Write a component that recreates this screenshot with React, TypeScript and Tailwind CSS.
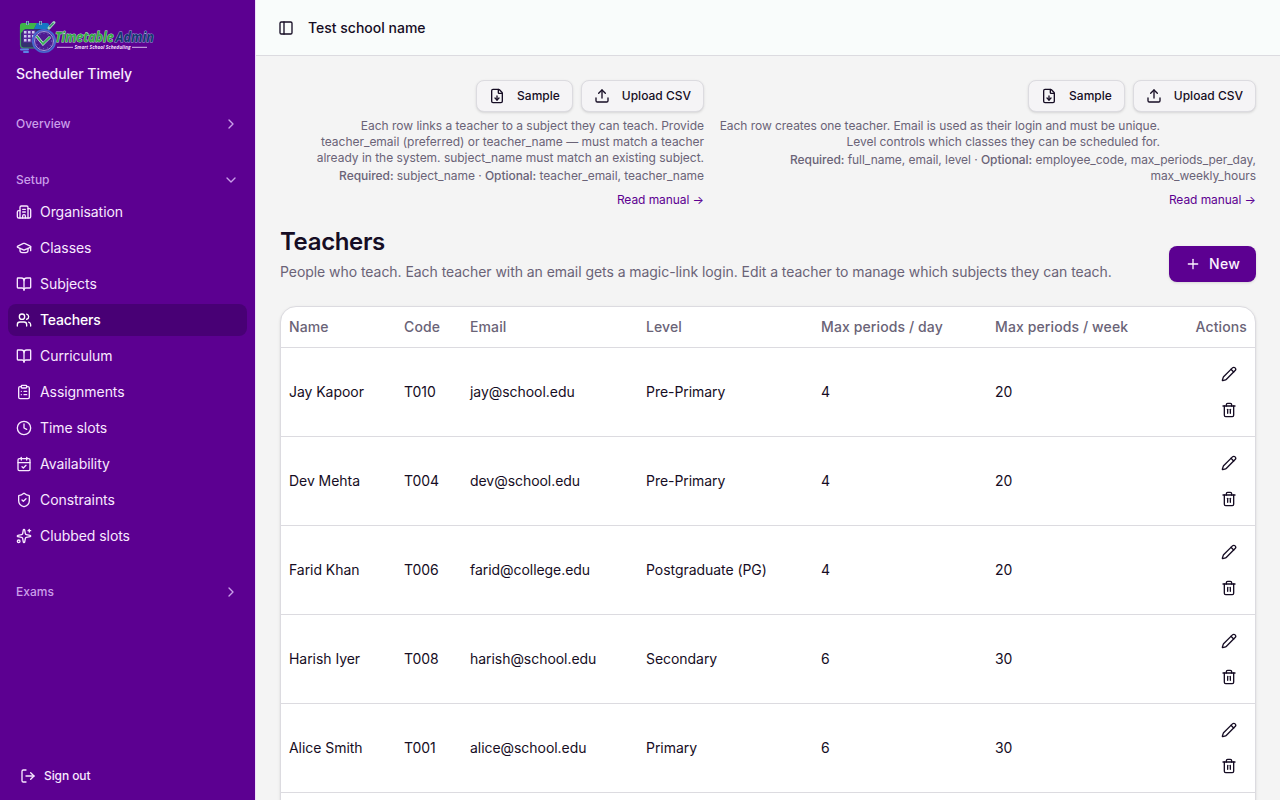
import type { ReactNode } from 'react'
import {
  BookOpen,
  Building2,
  CalendarCheck,
  ChevronDown,
  ChevronRight,
  ClipboardList,
  Clock,
  FileDown,
  GraduationCap,
  LogOut,
  PanelLeft,
  Pencil,
  Plus,
  ShieldCheck,
  Sparkles,
  Trash2,
  Upload,
  Users,
} from 'lucide-react'
import { clsx } from 'clsx'

const setupItems = [
  { label: 'Organisation', icon: Building2 },
  { label: 'Classes', icon: GraduationCap },
  { label: 'Subjects', icon: BookOpen },
  { label: 'Teachers', icon: Users, active: true },
  { label: 'Curriculum', icon: BookOpen },
  { label: 'Assignments', icon: ClipboardList },
  { label: 'Time slots', icon: Clock },
  { label: 'Availability', icon: CalendarCheck },
  { label: 'Constraints', icon: ShieldCheck },
  { label: 'Clubbed slots', icon: Sparkles },
]

const teachers = [
  { name: 'Jay Kapoor', code: 'T010', email: 'jay@school.edu', level: 'Pre-Primary', day: 4, week: 20 },
  { name: 'Dev Mehta', code: 'T004', email: 'dev@school.edu', level: 'Pre-Primary', day: 4, week: 20 },
  { name: 'Farid Khan', code: 'T006', email: 'farid@college.edu', level: 'Postgraduate (PG)', day: 4, week: 20 },
  { name: 'Harish Iyer', code: 'T008', email: 'harish@school.edu', level: 'Secondary', day: 6, week: 30 },
  { name: 'Alice Smith', code: 'T001', email: 'alice@school.edu', level: 'Primary', day: 6, week: 30 },
]

function Logo() {
  return (
    <svg width="140" height="40" viewBox="0 0 140 40" className="block overflow-visible">
      <rect x="4.5" y="8" width="28" height="24" rx="3" fill="#34306f" stroke="#3c9a63" strokeWidth="1.2" />
      <path d="M4 18V9.5q0-2.500 2.500-2.500H21l-3 6H9z" fill="#3fb549" />
      <path d="M18 13l3-6h10q2 0 2 2v4z" fill="#1677c4" />
      <path d="M11.5 5v4M24.5 5v4" stroke="#8fa9cf" strokeWidth="3" />
      <path d="M11.5 5.500v3M24.500 5.500v3" stroke="#28507c" strokeWidth="1.2" />
      <rect x="7" y="14" width="12.5" height="12.5" fill="#5a2a9c" />
      <g fill="#cfcdf0">
        {[15, 19, 23].map((y) => (
          <g key={y}>
            <rect x="8" y={y} width="2.5" height="2.5" />
            <rect x="12" y={y} width="2.5" height="2.5" />
            <rect x="16" y={y} width="2.5" height="2.5" />
          </g>
        ))}
      </g>
      <path d="M5 33.500h7M8 36h4" stroke="#5b83e6" strokeWidth="2" strokeLinecap="round" />
      <circle cx="28" cy="25" r="11.2" fill="#4f1a91" stroke="#4668cf" strokeWidth="1.8" />
      <circle cx="28" cy="25" r="9.5" fill="none" stroke="#b5c0f0" strokeWidth="0.8" />
      <circle cx="28" cy="25" r="7.8" fill="none" stroke="#7f8fdc" strokeWidth="0.8" strokeDasharray="1 3" />
      <path d="M20.500 20l6.500 8 7-7" fill="none" stroke="#dcebfa" strokeWidth="2.800" />
      <path d="M20.500 20l6.500 8 7-7" fill="none" stroke="#3aae55" strokeWidth="1.800" />
      <path d="M33 12l5-5.500" stroke="#a7d3bf" strokeWidth="3" strokeLinecap="round" />
      <path d="M33.500 11l4-4" stroke="#378f6b" strokeWidth="1.5" />
      <g
        fontFamily="Open Sans, Noto Sans, sans-serif"
        fontSize="14"
        fontWeight="700"
        fontStyle="italic"
        strokeWidth="0.9"
        paintOrder="stroke"
      >
        <text x="39" y="25.5" textLength="58.5" lengthAdjust="spacingAndGlyphs" fill="#35ab45" stroke="#b5dcc5">
          Timetable
        </text>
        <text x="99.5" y="25.5" textLength="38.5" lengthAdjust="spacingAndGlyphs" fill="#15366f" stroke="#98abd6">
          Admin
        </text>
      </g>
      <path d="M41 31.300h16M116 31.300h15" stroke="#d7b7ec" strokeWidth="1" />
      <text
        x="58.5"
        y="33.2"
        textLength="56"
        lengthAdjust="spacingAndGlyphs"
        fontFamily="Open Sans, Noto Sans, sans-serif"
        fontSize="5.5"
        fontWeight="700"
        fontStyle="italic"
        fill="#efdefa"
      >
        Smart School Scheduling
      </text>
    </svg>
  )
}

function GroupLabel({ label, open }: { label: string; open?: boolean }) {
  const Chevron = open ? ChevronDown : ChevronRight

  return (
    <div className="flex h-8 items-center justify-between px-2 text-xs font-medium text-[#ca9ee9]">
      {label}
      <Chevron className="h-4 w-4" />
    </div>
  )
}

function Sidebar() {
  return (
    <aside className="flex w-64 shrink-0 flex-col border-r border-[#f0dcfb] bg-[#5c0091] text-[#f8e9ff]">
      <div className="flex h-25 flex-col px-4 pt-4">
        <Logo />
        <span className="mt-2 text-sm font-medium tracking-[-0.04px]">Scheduler Timely</span>
      </div>
      <nav className="flex flex-1 flex-col gap-2">
        <div className="p-2">
          <GroupLabel label="Overview" />
        </div>
        <div className="p-2">
          <GroupLabel label="Setup" open />
          <ul className="flex flex-col gap-1">
            {setupItems.map(({ label, icon: Icon, active }) => (
              <li
                key={label}
                className={clsx(
                  'flex h-8 items-center gap-2 rounded-lg px-2 text-sm',
                  active ? 'bg-[#480075] font-medium tracking-[-0.18px] text-white' : 'tracking-[-0.06px]',
                )}
              >
                <Icon className="h-4 w-4" />
                {label}
              </li>
            ))}
          </ul>
        </div>
        <div className="p-2">
          <GroupLabel label="Exams" />
        </div>
      </nav>
      <div className="flex h-12 items-center gap-2 px-5 text-xs font-medium tracking-[-0.1px]">
        <LogOut className="h-4 w-4" />
        Sign out
      </div>
    </aside>
  )
}

function OutlineButton({ children }: { children: ReactNode }) {
  return (
    <button className="flex h-8 items-center gap-3 rounded-lg border border-[#dcdbe0] bg-[#f5f4f6] px-3 text-xs font-medium text-[#160d24] shadow-sm">
      {children}
    </button>
  )
}

interface CsvImportProps {
  description: string
  required: string
  optional: string
  className: string
  descriptionClassName: string
}

function CsvImport({ description, required, optional, className, descriptionClassName }: CsvImportProps) {
  return (
    <div className={clsx('text-right text-xs text-[#6a6377]', className)}>
      <div className="flex justify-end gap-2">
        <OutlineButton>
          <FileDown className="h-4 w-4" />
          Sample
        </OutlineButton>
        <OutlineButton>
          <Upload className="h-4 w-4" />
          Upload CSV
        </OutlineButton>
      </div>
      <p className={clsx('mt-1.5', descriptionClassName)}>{description}</p>
      <p className="mt-0.5 tracking-[-0.05px]">
        <span className="font-medium">Required:</span> {required} · <span className="font-medium">Optional:</span>{' '}
        {optional}
      </p>
      <a className="mt-2 block tracking-[-0.07px] text-[#5c0091]">Read manual →</a>
    </div>
  )
}

function TeachersTable() {
  return (
    <div className="mt-6 overflow-hidden rounded-2xl border border-[#dcdbe0] bg-white shadow-sm">
      <table className="w-full table-fixed text-left text-sm">
        <colgroup>
          <col className="w-[115px]" />
          <col className="w-[66px]" />
          <col className="w-[176px]" />
          <col className="w-[175px]" />
          <col className="w-[174px]" />
          <col className="w-[174px]" />
          <col />
        </colgroup>
        <thead>
          <tr className="h-10 border-b border-[#dcdbe0] tracking-[0.11px] text-[#6a6377] [&>th]:px-2 [&>th]:font-medium">
            <th>Name</th>
            <th>Code</th>
            <th>Email</th>
            <th>Level</th>
            <th>Max periods / day</th>
            <th>Max periods / week</th>
            <th className="text-right">Actions</th>
          </tr>
        </thead>
        <tbody>
          {teachers.map((teacher) => (
            <tr key={teacher.code} className="h-[89px] border-b border-[#dcdbe0] tracking-[-0.05px] [&>td]:px-2">
              <td>{teacher.name}</td>
              <td>{teacher.code}</td>
              <td>{teacher.email}</td>
              <td>{teacher.level}</td>
              <td>{teacher.day}</td>
              <td>{teacher.week}</td>
              <td>
                <div className="flex flex-col items-end">
                  <button className="flex h-9 w-9 items-center justify-center">
                    <Pencil className="h-4 w-4" />
                  </button>
                  <button className="flex h-9 w-9 items-center justify-center">
                    <Trash2 className="h-4 w-4" />
                  </button>
                </div>
              </td>
            </tr>
          ))}
          <tr className="h-[89px]">
            <td colSpan={7} />
          </tr>
        </tbody>
      </table>
    </div>
  )
}

export default function App() {
  return (
    <div className="flex h-screen overflow-hidden bg-[#f4f4f4] font-['Inter',sans-serif] text-[#160d24]">
      <Sidebar />
      <div className="flex min-w-0 flex-1 flex-col">
        <header className="flex h-14 shrink-0 items-center gap-3.5 border-b border-[#dcdbe0] bg-[#f9fcfb] px-[22px]">
          <PanelLeft className="h-4 w-4" />
          <span className="text-sm font-medium">Test school name</span>
        </header>
        <main className="min-h-0 flex-1 overflow-hidden p-6">
          <div className="flex gap-4">
            <CsvImport
              className="w-[424px] pl-8"
              descriptionClassName="tracking-[-0.02px]"
              description="Each row links a teacher to a subject they can teach. Provide teacher_email (preferred) or teacher_name — must match a teacher already in the system. subject_name must match an existing subject."
              required="subject_name"
              optional="teacher_email, teacher_name"
            />
            <CsvImport
              className="w-[536px]"
              descriptionClassName="-ml-2 w-[448px] tracking-[-0.05px]"
              description="Each row creates one teacher. Email is used as their login and must be unique. Level controls which classes they can be scheduled for."
              required="full_name, email, level"
              optional="employee_code, max_periods_per_day, max_weekly_hours"
            />
          </div>
          <div className="mt-[18px] flex items-end justify-between">
            <div>
              <h1 className="text-2xl font-semibold tracking-[-0.35px]">Teachers</h1>
              <p className="mt-1 text-sm tracking-[-0.055px] text-[#6a6377]">
                People who teach. Each teacher with an email gets a magic-link login. Edit a teacher to manage which
                subjects they can teach.
              </p>
            </div>
            <button className="flex h-9 items-center gap-2 rounded-lg bg-[#5c0091] px-4 text-sm font-medium tracking-[0.25px] text-[#fbf3ff] shadow-sm">
              <Plus className="h-4 w-4" />
              New
            </button>
          </div>
          <TeachersTable />
        </main>
      </div>
    </div>
  )
}
